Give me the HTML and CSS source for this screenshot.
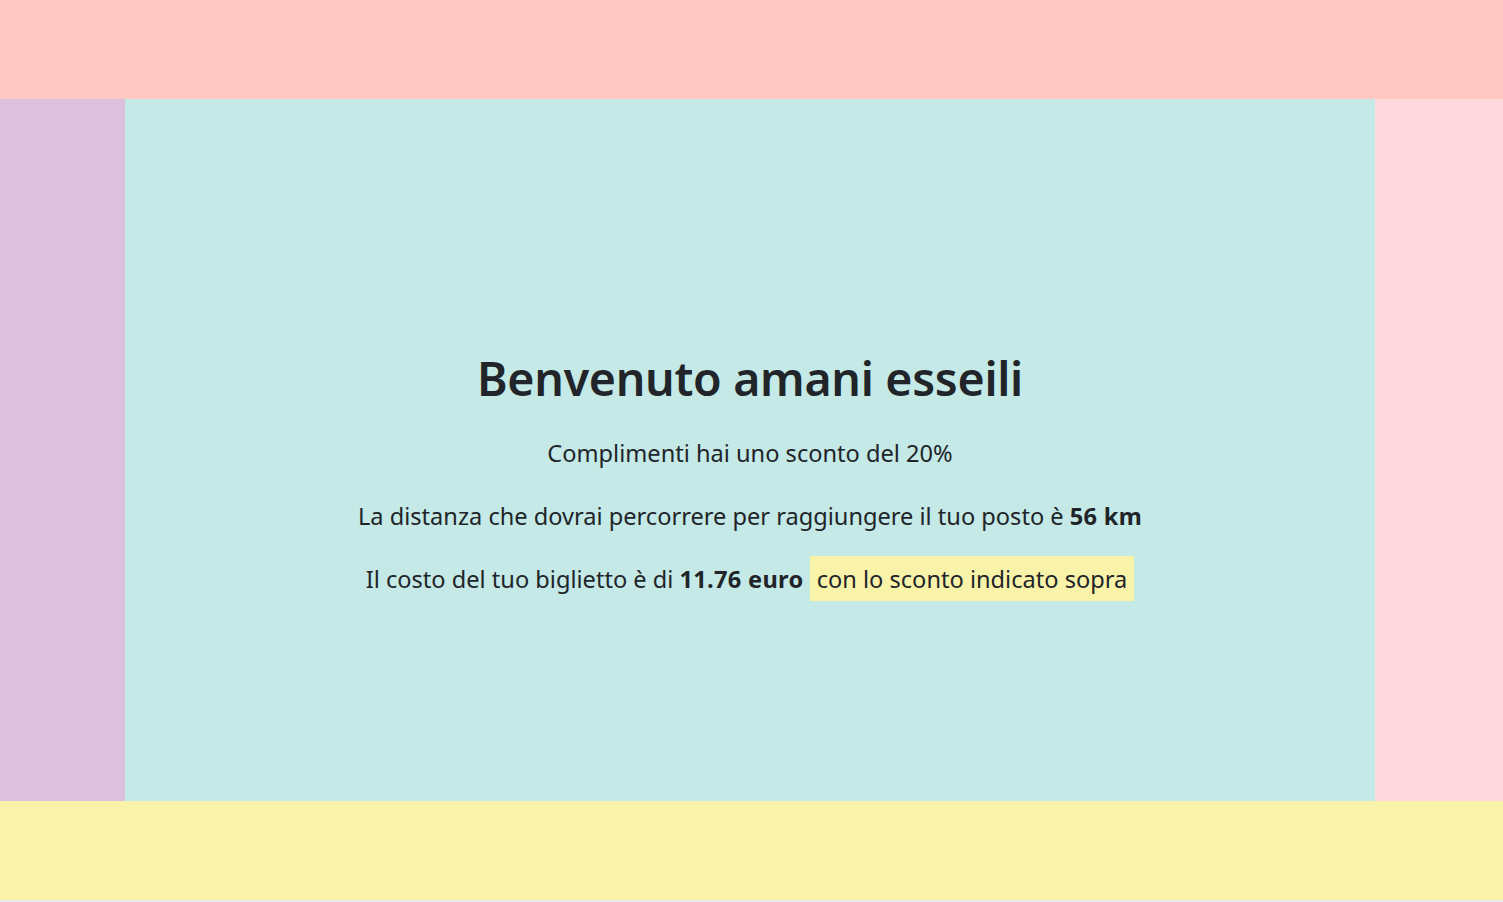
FILE: index.html
```html
<!DOCTYPE html>
<html lang="it">
<head>
<meta charset="utf-8">
<title>Biglietto</title>
<link rel="stylesheet" href="styles.css">
</head>
<body>
<div class="page">
  <header class="top"></header>
  <div class="middle">
    <aside class="side-left"></aside>
    <main class="content">
      <h1 class="title">Benvenuto amani esseili</h1>
      <p class="line">Complimenti hai uno sconto del 20%</p>
      <p class="line">La distanza che dovrai percorrere per raggiungere il tuo posto è <strong>56 km</strong></p>
      <p class="line">Il costo del tuo biglietto è di <strong>11.76 euro</strong> <span class="mark">con lo sconto indicato sopra</span></p>
    </main>
    <aside class="side-right"></aside>
  </div>
  <footer class="bottom"></footer>
</div>
</body>
</html>
```

FILE: styles.css
```css
html, body {
  margin: 0;
  padding: 0;
  height: 100%;
}
body {
  font-family: "Noto Sans", "Open Sans", sans-serif;
  color: #212529;
  background: #e6ecee;
}
.page {
  display: grid;
  grid-template-rows: 99px 702px 99px;
  height: 902px;
}
.top {
  background: #ffc8c3;
}
.middle {
  display: grid;
  grid-template-columns: 125px 1fr 128px;
}
.side-left {
  background: #dcc1df;
}
.side-right {
  background: #ffd9dd;
}
.content {
  background: #c4e9e6;
  display: flex;
  flex-direction: column;
  align-items: center;
  padding-top: 252px;
  text-align: center;
}
.bottom {
  background: #f9f3a9;
}
.title {
  font-size: 46.5px;
  font-weight: 600;
  line-height: 1.2;
  margin: 0 0 29px;
  letter-spacing: -0.3px;
}
.line {
  font-size: 23.6px;
  line-height: 1.5;
  margin: 0 0 27.5px;
}
.line strong {
  font-weight: 700;
  letter-spacing: 0.3px;
}
.mark {
  background: #f9f3a9;
  padding: 6.5px 7px;
}
```
